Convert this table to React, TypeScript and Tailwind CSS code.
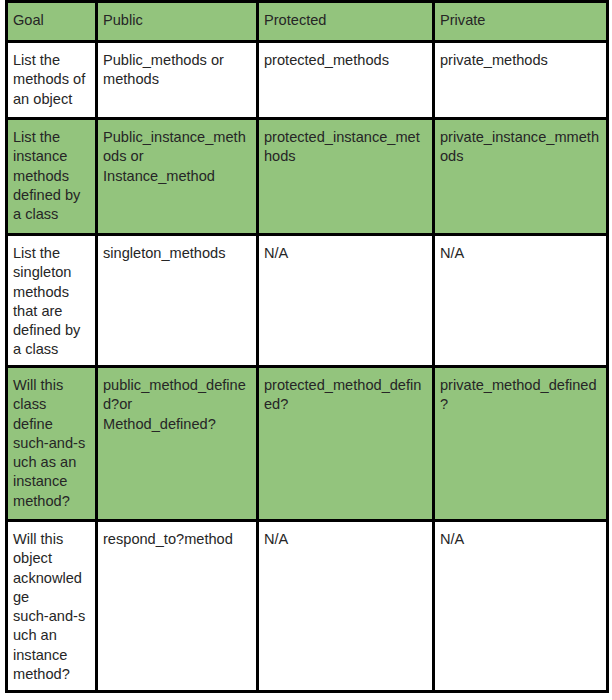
const rows: { green: boolean; cells: string[][] }[] = [
  {
    green: true,
    cells: [['Goal'], ['Public'], ['Protected'], ['Private']],
  },
  {
    green: false,
    cells: [
      ['List the', 'methods of', 'an object'],
      ['Public_methods or', 'methods'],
      ['protected_methods'],
      ['private_methods'],
    ],
  },
  {
    green: true,
    cells: [
      ['List the', 'instance', 'methods', 'defined by', 'a class'],
      ['Public_instance_meth', 'ods or', 'Instance_method'],
      ['protected_instance_met', 'hods'],
      ['private_instance_mmeth', 'ods'],
    ],
  },
  {
    green: false,
    cells: [
      ['List the', 'singleton', 'methods', 'that are', 'defined by', 'a class'],
      ['singleton_methods'],
      ['N/A'],
      ['N/A'],
    ],
  },
  {
    green: true,
    cells: [
      ['Will this', 'class', 'define', 'such-and-s', 'uch as an', 'instance', 'method?'],
      ['public_method_define', 'd?or', 'Method_defined?'],
      ['protected_method_defin', 'ed?'],
      ['private_method_defined', '?'],
    ],
  },
  {
    green: false,
    cells: [
      ['Will this', 'object', 'acknowled', 'ge', 'such-and-s', 'uch an', 'instance', 'method?'],
      ['respond_to?method'],
      ['N/A'],
      ['N/A'],
    ],
  },
];

export default function App() {
  return (
    <div className="bg-white w-[612px] h-[700px]">
      <div
        className="ml-[5px] w-[604px] grid grid-cols-[90px_161px_176px_174px] grid-rows-[40px_77px_116px_132px_154px_171px] border-t-[3px] border-l-[3px] border-black text-[#262626] text-[14.6px] leading-[19.3px]"
        style={{ fontFamily: "'Liberation Sans', Arial, sans-serif" }}
      >
        {rows.map((row, r) =>
          row.cells.map((lines, c) => (
            <div
              key={`${r}-${c}`}
              className={`px-[5px] pt-[8px] border-r-[3px] border-b-[3px] border-black ${
                row.green ? 'bg-[#93c47d]' : 'bg-white'
              }`}
            >
              {lines.map((line, i) => (
                <div key={i} className="whitespace-nowrap">
                  {line}
                </div>
              ))}
            </div>
          ))
        )}
      </div>
    </div>
  );
}
